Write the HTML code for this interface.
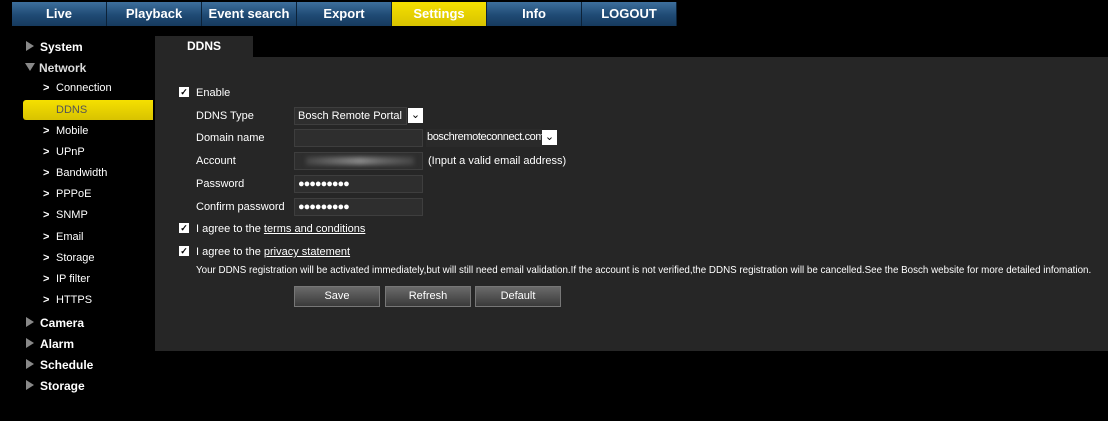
<!DOCTYPE html><html><head><style>
body{margin:0;width:1108px;height:421px;background:#000;font-family:"Liberation Sans",sans-serif;color:#fff;position:relative;overflow:hidden}
.a{position:absolute}
.tab{position:absolute;top:2px;height:24px;width:94px;background:linear-gradient(#3d6f9c,#1f4a74 55%,#163a5e);border-right:1px solid #0c2238;font-weight:bold;font-size:13px;text-align:center;line-height:23px;color:#fff}
.tab.on{background:linear-gradient(#f5e000,#d8c300)}
.s{position:absolute;font-size:12px;font-weight:bold}
.tri{position:absolute;left:26px;width:0;height:0;border-top:5px solid transparent;border-bottom:5px solid transparent;border-left:8px solid #888}
.sub{position:absolute;left:43px;font-size:11px}
.sub b{display:inline-block;width:13px}
.l{position:absolute;left:196px;font-size:11px;white-space:nowrap}
.in{position:absolute;left:294px;width:129px;height:18px;background:#2e2e2e;border:1px solid #3e3e3e;box-sizing:border-box;font-size:11px;line-height:16px;padding-left:3px;white-space:nowrap;overflow:hidden}
.cb{position:absolute;left:179px;width:10px;height:10px;background:#fff;color:#000;font-size:9px;line-height:10px;text-align:center;font-weight:bold}
.dd{position:absolute;width:15px;height:15px;background:#fff;color:#000;font-size:11px;text-align:center;line-height:15px}
.btn{position:absolute;top:286px;height:21px;width:86px;background:linear-gradient(#6a6a6a,#3a3a3a);border:1px solid #777;box-sizing:border-box;font-size:11px;text-align:center;line-height:19px}
</style></head><body>
<div class="tab" style="left:12px">Live</div>
<div class="tab" style="left:107px">Playback</div>
<div class="tab" style="left:202px">Event search</div>
<div class="tab" style="left:297px">Export</div>
<div class="tab on" style="left:392px">Settings</div>
<div class="tab" style="left:487px">Info</div>
<div class="tab" style="left:582px">LOGOUT</div>

<div class="a" style="left:155px;top:57px;width:953px;height:294px;background:#262626"></div>
<div class="a" style="left:155px;top:36px;width:98px;height:21px;background:#262626;font-size:12px;font-weight:bold;text-align:center;line-height:21px">DDNS</div>

<div class="tri" style="top:41px"></div><div class="s" style="left:40px;top:40px">System</div>
<div class="a" style="left:25px;top:63px;border-left:5px solid transparent;border-right:5px solid transparent;border-top:8px solid #888"></div><div class="s" style="left:39px;top:61px;color:#ddd">Network</div>
<div class="sub" style="top:82px"><b>&gt;</b>Connection</div>
<div class="a" style="left:23px;top:100px;width:130px;height:20px;background:linear-gradient(#f5e000,#d8c300);border-radius:3px 0 0 3px"></div>
<div class="sub" style="left:56px;top:104px;color:#555">DDNS</div>
<div class="sub" style="top:125px"><b>&gt;</b>Mobile</div>
<div class="sub" style="top:146px"><b>&gt;</b>UPnP</div>
<div class="sub" style="top:167px"><b>&gt;</b>Bandwidth</div>
<div class="sub" style="top:188px"><b>&gt;</b>PPPoE</div>
<div class="sub" style="top:209px"><b>&gt;</b>SNMP</div>
<div class="sub" style="top:231px"><b>&gt;</b>Email</div>
<div class="sub" style="top:252px"><b>&gt;</b>Storage</div>
<div class="sub" style="top:273px"><b>&gt;</b>IP filter</div>
<div class="sub" style="top:294px"><b>&gt;</b>HTTPS</div>
<div class="tri" style="top:317px"></div><div class="s" style="left:40px;top:316px">Camera</div>
<div class="tri" style="top:338px"></div><div class="s" style="left:40px;top:337px">Alarm</div>
<div class="tri" style="top:359px"></div><div class="s" style="left:40px;top:358px">Schedule</div>
<div class="tri" style="top:380px"></div><div class="s" style="left:40px;top:379px">Storage</div>

<div class="cb" style="top:87px">✓</div><div class="l" style="top:87px">Enable</div>
<div class="l" style="top:110px">DDNS Type</div>
<div class="in" style="top:107px;width:113px">Bosch Remote Portal</div><div class="dd" style="left:408px;top:108px">⌄</div>
<div class="l" style="top:132px">Domain name</div>
<div class="in" style="top:129px"></div>
<div class="in" style="left:426px;top:129px;width:116px;border:none;background:#2a2a2a;padding-left:1px;letter-spacing:-0.4px">boschremoteconnect.com</div><div class="dd" style="left:542px;top:130px">⌄</div>
<div class="l" style="top:155px">Account</div>
<div class="in" style="top:152px"><div style="margin:4px 8px;height:8px;background:linear-gradient(90deg,#444,#888 50%,#666 70%,#444);filter:blur(2px)"></div></div>
<div class="l" style="left:428px;top:155px">(Input a valid email address)</div>
<div class="l" style="top:178px">Password</div>
<div class="in" style="top:175px;letter-spacing:-1px">●●●●●●●●●</div>
<div class="l" style="top:201px">Confirm password</div>
<div class="in" style="top:198px;letter-spacing:-1px">●●●●●●●●●</div>
<div class="cb" style="top:223px">✓</div><div class="l" style="top:223px">I agree to the <u>terms and conditions</u></div>
<div class="cb" style="top:246px">✓</div><div class="l" style="top:246px">I agree to the <u>privacy statement</u></div>
<div class="l" style="top:264px;font-size:10.5px;transform:scaleX(0.933);transform-origin:0 0">Your DDNS registration will be activated immediately,but will still need email validation.If the account is not verified,the DDNS registration will be cancelled.See the Bosch website for more detailed infomation.</div>
<div class="btn" style="left:294px">Save</div>
<div class="btn" style="left:385px">Refresh</div>
<div class="btn" style="left:475px">Default</div>
</body></html>
